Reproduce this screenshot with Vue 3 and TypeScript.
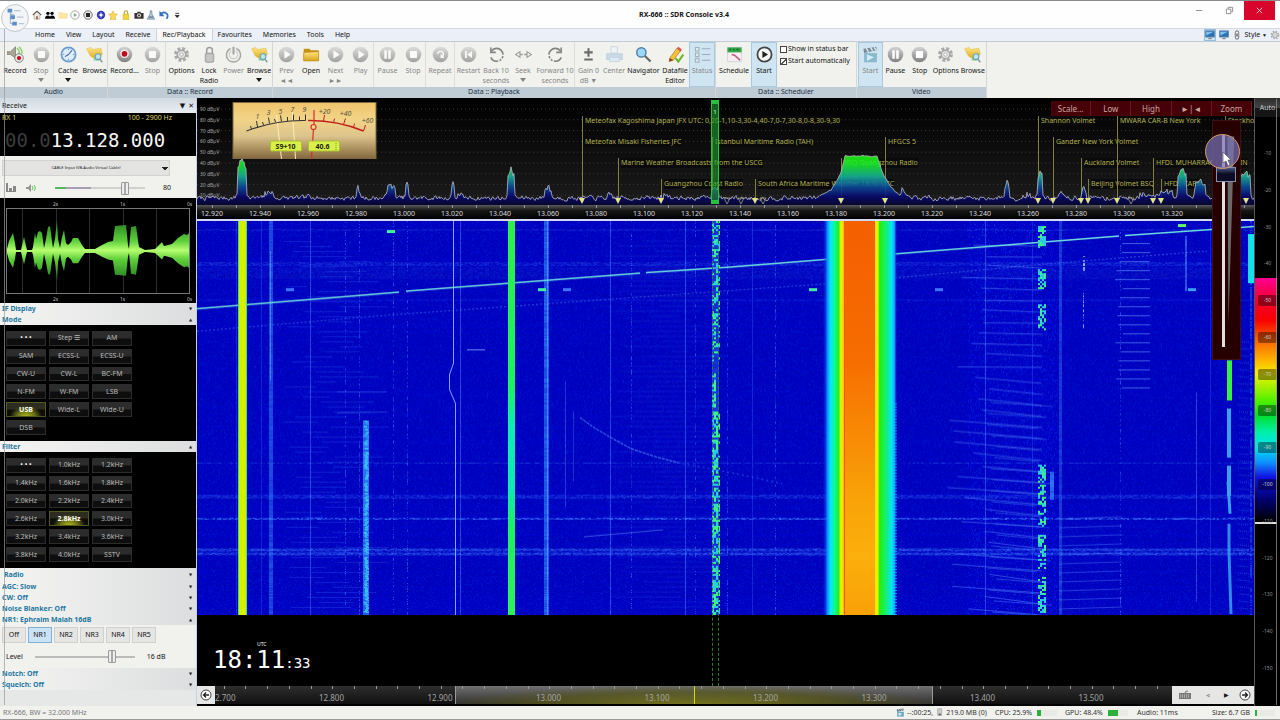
<script setup lang="ts">
import { computed, onMounted, ref } from 'vue'

interface RibbonItem { icon: string; label: string; sub?: string; w: number; off?: boolean; on?: boolean; sep?: boolean; drop?: boolean }
interface RibbonGroup { name: string; items: RibbonItem[]; checks?: boolean }
interface Station { x: number; row: number; name: string }
interface Peak { x: number; h: number; w: number }

const quick = ['home', 'people', 'folderpale', 'playo', 'stopo', 'help', 'star', 'lock', 'camera', 'flask', 'undo', 'more']
const tabs = ['Home', 'View', 'Layout', 'Receive', 'Rec/Playback', 'Favourites', 'Memories', 'Tools', 'Help']

const groups: RibbonGroup[] = [
  { name: 'Audio', items: [
    { icon: 'audiorec', label: 'Record', w: 28 },
    { icon: 'stop', label: 'Stop', w: 24, off: true, drop: true },
    { icon: 'clock', label: 'Cache', w: 28, sep: true, drop: true },
    { icon: 'browse', label: 'Browse', w: 25 } ] },
  { name: 'Data :: Record', items: [
    { icon: 'record', label: 'Record...', w: 31 },
    { icon: 'stop', label: 'Stop', w: 25, off: true },
    { icon: 'gear', label: 'Options', w: 31, sep: true },
    { icon: 'padlock', label: 'Lock', sub: 'Radio', w: 24 },
    { icon: 'power', label: 'Power', w: 25, off: true },
    { icon: 'browse', label: 'Browse', w: 26, drop: true } ] },
  { name: 'Data :: Playback', items: [
    { icon: 'play', label: 'Prev', sub: '◄◄', w: 25, off: true },
    { icon: 'folder', label: 'Open', w: 24 },
    { icon: 'play', label: 'Next', sub: '►►', w: 25, off: true },
    { icon: 'play', label: 'Play', w: 25, off: true },
    { icon: 'pause', label: 'Pause', w: 27, off: true, sep: true },
    { icon: 'stop', label: 'Stop', w: 24, off: true },
    { icon: 'repeat', label: 'Repeat', w: 28, off: true, sep: true },
    { icon: 'restart', label: 'Restart', w: 27, off: true, sep: true },
    { icon: 'back', label: 'Back 10', sub: 'seconds', w: 28, off: true },
    { icon: 'seek', label: 'Seek', w: 26, off: true, drop: true },
    { icon: 'forward', label: 'Forward 10', sub: 'seconds', w: 38, off: true },
    { icon: 'gain', label: 'Gain 0', sub: 'dB ▼', w: 27, off: true, sep: true },
    { icon: 'printer', label: 'Center', w: 24, off: true },
    { icon: 'search', label: 'Navigator', w: 35 },
    { icon: 'pencil', label: 'Datafile', sub: 'Editor', w: 28 },
    { icon: 'list', label: 'Status', w: 26, off: true, on: true } ] },
  { name: 'Data :: Scheduler', checks: true, items: [
    { icon: 'schedule', label: 'Schedule', w: 34 },
    { icon: 'playbig', label: 'Start', w: 26, on: true } ] },
  { name: 'Video', items: [
    { icon: 'clapper', label: 'Start', w: 25, off: true, on: true },
    { icon: 'pause', label: 'Pause', w: 25 },
    { icon: 'stop', label: 'Stop', w: 24 },
    { icon: 'gear', label: 'Options', w: 28 },
    { icon: 'browse', label: 'Browse', w: 26 } ] },
]

const modes = ['• • •', 'Step ☰', 'AM', 'SAM', 'ECSS-L', 'ECSS-U', 'CW-U', 'CW-L', 'BC-FM', 'N-FM', 'W-FM', 'LSB', 'USB', 'Wide-L', 'Wide-U', 'DSB']
const filters = ['• • •', '1.0kHz', '1.2kHz', '1.4kHz', '1.6kHz', '1.8kHz', '2.0kHz', '2.2kHz', '2.4kHz', '2.6kHz', '2.8kHz', '3.0kHz', '3.2kHz', '3.4kHz', '3.6kHz', '3.8kHz', '4.0kHz', 'SSTV']
const mode = ref('USB')
const filter = ref('2.8kHz')
const nrs = ['Off', 'NR1', 'NR2', 'NR3', 'NR4', 'NR5']
const nr = ref('NR1')
const volume = ref(80)
const level = ref(16)
const zoom = ref(84)
const showInStatus = ref(false)
const autoStart = ref(true)
const radioSections = ['AGC: Slow', 'CW: Off', 'Noise Blanker: Off']

/* Plot geometry: the display spans W units across, the pan strip S units */
const W = 1057
const S = 957
const pct = (x: number, total = W) => `${(x / total) * 100}%`
const panWindow = { left: pct(240, S), width: pct(478, S) }

const freqs = Array.from({ length: 21 }, (_, i) => ({ x: 15 + i * 48, t: (12.92 + i * 0.02).toFixed(3) }))
const ticks = Array.from({ length: 44 }, (_, i) => 15 + i * 24)
const levels = Array.from({ length: 9 }, (_, i) => ({ y: 11 + i * 10.8, t: `${90 - i * 10} dBµV` }))
const panLabels = Array.from({ length: 9 }, (_, i) => ({ x: 26 + i * 108.5, t: (12.7 + i * 0.1).toFixed(3) }))
const panTicks = Array.from({ length: 46 }, (_, i) => 5 + i * 21.7)
const scaleTicks = Array.from({ length: 15 }, (_, i) => -10 * (i + 1))

const stations: Station[] = [
  { x: 385, row: 0, name: 'Meteofax Kagoshima Japan JFX UTC: 0,20-1,10-3,30-4,40-7,0-7,30-8,0-8,30-9,30' },
  { x: 385, row: 1, name: 'Meteofax Misaki Fisheries JFC' },
  { x: 421, row: 2, name: 'Marine Weather Broadcasts from the USCG' },
  { x: 464, row: 3, name: 'Guangzhou Coast Radio' },
  { x: 515, row: 1, name: 'Istanbul Maritime Radio (TAH)' },
  { x: 558, row: 3, name: 'South Africa Maritime Weather 18:30 UTC' },
  { x: 644, row: 2, name: 'XSQ Guangzhou Radio' },
  { x: 688, row: 1, name: 'HFGCS 5' },
  { x: 841, row: 0, name: 'Shannon Volmet' },
  { x: 856, row: 1, name: 'Gander New York Volmet' },
  { x: 884, row: 2, name: 'Auckland Volmet' },
  { x: 891, row: 3, name: 'Beijing Volmet BSQ' },
  { x: 920, row: 0, name: 'MWARA CAR-B New York' },
  { x: 956, row: 2, name: 'HFDL MUHARRAQ BAHRAIN' },
  { x: 964, row: 3, name: 'HFDL CAPS' },
  { x: 1028, row: 0, name: 'Stockholm' },
]
const markers = [385, 421, 464, 558, 644, 688, 841, 856, 884, 891, 920, 956, 964, 1049]
const hollow = [530, 544, 566, 934]

function rng(seed: number) {
  let s = seed
  return () => {
    s = (s * 1664525 + 1013904223) >>> 0
    return s / 4294967296
  }
}

const peaks: Peak[] = [
  { x: 45, h: 45, w: 4 }, { x: 72, h: 11, w: 4 }, { x: 113, h: 8, w: 2 }, { x: 161, h: 18, w: 1 }, { x: 194, h: 18, w: 4 },
  { x: 210, h: 20, w: 1 }, { x: 256, h: 21, w: 1 }, { x: 263, h: 9, w: 2 }, { x: 314, h: 34, w: 3 }, { x: 351, h: 16, w: 3 },
  { x: 413, h: 9, w: 2 }, { x: 468, h: 7, w: 5 }, { x: 518, h: 17, w: 3 }, { x: 706, h: 16, w: 1 }, { x: 810, h: 21, w: 2 },
  { x: 830, h: 8, w: 4 }, { x: 843, h: 34, w: 2 }, { x: 864, h: 11, w: 2 }, { x: 887, h: 15, w: 2 }, { x: 955, h: 9, w: 14 },
  { x: 985, h: 36, w: 4 }, { x: 970, h: 12, w: 6 }, { x: 1003, h: 22, w: 5 }, { x: 1030, h: 13, w: 8 }, { x: 1048, h: 32, w: 5 },
]
const hill = [[622, 0], [634, 6], [640, 16], [644, 24], [648, 40], [680, 40], [686, 22], [693, 10], [703, 0]]
const trace = (() => {
  const r = rng(7)
  const pts: string[] = []
  let n = 0
  for (let x = 0; x <= W; x += 1) {
    n = n * 0.5 + (r() - 0.5) * 4
    let h = 5 + n
    for (const p of peaks) {
      const d = Math.abs(x - p.x)
      if (d <= p.w) h = Math.max(h, p.h * (1 - 0.2 * (d / p.w)) + (r() - 0.5) * 6)
      else if (d < p.w + 3) h = Math.max(h, 5 + n + (p.h * 0.15 * (p.w + 3 - d)) / 3)
    }
    for (let i = 1; i < hill.length; i++) {
      const [x0, h0] = hill[i - 1]
      const [x1, h1] = hill[i]
      if (x >= x0 && x <= x1) h = 7 + h0 + ((h1 - h0) * (x - x0)) / (x1 - x0) + n * 0.3
    }
    pts.push(`${x},${(105 - h).toFixed(1)}`)
  }
  return pts.join(' ')
})()

const env: number[][] = [[7, 2], [9, 10], [13, 18], [15, 8], [16, 1], [21, 1], [24, 14], [26, 5], [27, 1], [32, 1], [33, 4], [35, 18], [36, 12], [38, 19], [40, 20], [42, 18], [44, 3], [46, 12], [48, 24], [50, 25], [52, 10], [53, 3], [55, 12], [57, 31], [58, 12], [60, 3], [62, 14], [64, 21], [66, 8], [68, 6], [71, 9], [73, 13], [78, 13], [82, 6], [85, 2], [95, 2], [102, 6], [108, 9], [113, 10], [115, 25], [126, 26], [128, 6], [129, 2], [131, 24], [136, 25], [139, 4], [145, 1], [155, 2], [162, 9], [164, 5], [172, 7], [178, 13], [184, 17], [187, 16], [189, 18]]
const wave = computed(() => {
  const top = env.map(([x, a]) => `${x},${53 - a}`)
  const bot = [...env].reverse().map(([x, a]) => `${x},${53 + a * 0.95}`)
  return [...top, ...bot].join(' ')
})

const fall = ref<HTMLCanvasElement | null>(null)

function drawWaterfall(c: CanvasRenderingContext2D, w: number, h: number) {
  const r = rng(42)
  const img = c.createImageData(w, h)
  for (let y = 0; y < h; y++) {
    const row = r() * 10
    for (let x = 0; x < w; x++) {
      const i = (y * w + x) * 4
      const v = r()
      const hazy = x > 770 && x < 860 ? 14 : 0
      img.data[i] = 0
      img.data[i + 1] = v > 0.9 ? 20 + hazy : v * 6
      img.data[i + 2] = 180 + row + v * 18 + hazy * v
      img.data[i + 3] = 255
    }
  }
  c.putImageData(img, 0, 0)

  const col = (x: number, width: number, rgb: string, a: number, y0 = 0, y1 = h, jitter = 1, duty = 1) => {
    for (let y = y0; y < y1; y++) {
      if (r() > duty) continue
      c.fillStyle = `rgba(${rgb},${a * (0.6 + 0.4 * r())})`
      c.fillRect(x + Math.round((r() - 0.5) * jitter), y, width, 1)
    }
  }
  const band = (y: number, height: number, a: number) => {
    for (let yy = y; yy < y + height; yy++) {
      for (let x = 0; x < w; x += 2) {
        c.fillStyle = `rgba(60,120,255,${a * r()})`
        c.fillRect(x, yy, 2, 1)
      }
    }
  }
  const line = (pts: number[][], style: string, width: number, dash: number[] = []) => {
    c.strokeStyle = style
    c.lineWidth = width
    c.setLineDash(dash)
    c.beginPath()
    pts.forEach(([x, y], i) => (i ? c.lineTo(x, y) : c.moveTo(x, y)))
    c.stroke()
    c.setLineDash([])
  }

  band(41, 4, 0.35); band(46, 12, 0.15); band(78, 2, 0.2); band(273, 4, 0.4); band(296, 2, 0.9)
  band(326, 8, 0.35); band(327, 2, 0.6); band(331, 2, 0.6); band(241, 1, 0.5); band(8, 2, 0.25)

  /* Faint carriers */
  for (const x of [113, 263, 413, 488, 788]) col(x, 1, '70,140,255', 0.6)
  for (const x of [39, 64, 311, 555, 835, 1013]) col(x, 1, '50,110,255', 0.4)
  for (const x of [148, 162, 196, 210, 434, 498, 530, 578, 923]) col(x, 1, '90,160,255', 0.5, 0, h, 0, 0.35)
  col(72, 4, '50,140,255', 0.6); col(73, 1, '110,220,255', 0.5, 30, 160)
  col(347, 5, '50,140,255', 0.75); col(350, 1, '120,220,255', 0.5)
  col(862, 3, '50,130,255', 0.5)
  col(1053, 2, '60,160,255', 0.4, 0, h, 1, 0.6)
  col(368, 1, '80,140,255', 0.5, 160, 285, 0); col(376, 1, '80,140,255', 0.4, 190, 260, 0)
  col(999, 1, '120,170,255', 0.45, 171, 380, 0); col(988, 2, '70,140,255', 0.7, 15, 70)
  col(886, 2, '150,220,255', 0.9, 35, 50, 1, 0.6); col(886, 1, '150,220,255', 0.9, 72, 107, 1, 0.6)
  col(853, 4, '60,160,255', 0.8, 250, 278)

  /* Sweeper striations */
  for (let y = 22; y < 390; y += 11) {
    const slope = y > 150 ? 6 : 1
    const start = 748 + r() * 45
    line([[start, y + r() * 3], [845, y + slope + 2]], 'rgba(90,140,255,.5)', 1)
    if (y > 165) line([[790 + r() * 10, y + 5], [838 + r() * 18, y + 9]], 'rgba(90,150,255,.4)', 1)
  }
  for (let y = 22; y < 175; y += 9) line([[926 - r() * 8, y + 0.5], [953, y + 0.5]], 'rgba(100,150,255,.6)', 1)
  for (let y = 295; y < 390; y += 9) line([[862, y + 2], [925, y]], 'rgba(90,140,255,.4)', 1)
  for (let y = 120; y < 390; y += 7) line([[1040 + r() * 3, y], [1052, y + 1]], 'rgba(90,140,255,.4)', 1, [1, 1])
  for (let y = 20; y < 390; y += 5) {
    const x = 85 + r() * 60
    line([[x, y + 0.5], [x + 20 + r() * 40, y + 0.5]], 'rgba(60,110,255,.25)', 1)
    line([[405 + r() * 70, y], [480 + r() * 50, y]], 'rgba(60,110,255,.16)', 1)
  }
  line([[270, 128.5], [288, 128.5]], 'rgba(130,170,255,.8)', 1)
  line([[140, 170.5], [190, 170.5]], 'rgba(80,140,255,.4)', 1)
  line([[140, 191.5], [190, 190.5]], 'rgba(80,140,255,.4)', 1)
  line([[387, 315], [466, 308]], 'rgba(110,160,255,.5)', 1)

  /* Wandering carrier */
  line([[256.5, 0], [256.5, 142], [252.5, 153], [252.5, 168], [258.5, 182], [258.5, h]], 'rgba(160,190,255,.85)', 1)
  line([[383, 196], [397, 206], [412, 215], [434, 227], [458, 235], [481, 241]], 'rgba(100,160,255,.85)', 1, [3, 1])
  line([[481, 241], [539, 252], [585, 262]], 'rgba(90,150,255,.5)', 1, [2, 3])
  line([[0, 110], [190, 94], [539, 69], [640, 62], [860, 42], [1010, 30]], 'rgba(90,150,255,.5)', 1, [2, 2])
  line([[0, 87.5], [202, 71]], '#6fe0e0', 1.5)
  line([[209, 70], [443, 52]], '#6fe0e0', 1.5)
  line([[449, 51.5], [533, 46], [696, 33], [922, 15]], '#6fe0e0', 1.5)
  line([[928, 14.5], [w, 5.5]], '#6fe0e0', 1.5)

  const blob = (x: number, y: number, rgb: string) => {
    c.fillStyle = rgb
    c.fillRect(x, y, 8, 3)
  }
  blob(190, 9, '#3ff0a0'); blob(89, 67, '#3d74ff'); blob(341, 67, '#3ff0a0'); blob(366, 67, '#3d74ff')
  blob(612, 67, '#3ff0a0'); blob(738, 67, '#3d74ff'); blob(981, 3, '#5ff870'); blob(991, 67, '#38a0f0')

  /* Strong carriers */
  c.fillStyle = '#46e070'; c.fillRect(41, 0, 9, h)
  c.fillStyle = '#cdf200'; c.fillRect(42, 0, 7, h)
  col(45, 2, '250,225,0', 0.6)
  const g = c.createLinearGradient(0, 0, 0, h)
  g.addColorStop(0, '#2ff04a'); g.addColorStop(0.42, '#20f060'); g.addColorStop(0.52, '#12ecb0'); g.addColorStop(0.68, '#12e8b0'); g.addColorStop(0.78, '#20f060'); g.addColorStop(1, '#30f05a')
  c.fillStyle = g; c.fillRect(311, 0, 7, h)
  col(166, 6, '50,150,255', 0.9, 199); col(168, 3, '60,225,235', 0.8, 199, h, 2, 0.8)

  const speckle = (x: number, width: number, y0: number, y1: number, duty: number) => {
    for (let y = y0; y < y1; y += 2) {
      for (let xx = x; xx < x + width; xx += 2) {
        if (r() < duty) {
          c.fillStyle = r() > 0.5 ? '#3ff08a' : '#2cc8e8'
          c.fillRect(xx, y, 2, 2)
        }
      }
    }
  }
  col(515, 7, '50,120,255', 0.5)
  speckle(515, 7, 0, 140, 0.4); speckle(515, 4, 152, 185, 0.6); speckle(515, 7, 190, h, 0.6)
  for (const [a, b] of [[5, 27], [48, 68], [83, 110], [243, 304], [313, 346], [355, 391]]) speckle(841, 8, a, b, 0.6)

  /* Broadcast block with smooth shoulders */
  const b = c.createLinearGradient(626, 0, 700, 0)
  const stops: [number, string][] = [[0, 'rgba(0,40,220,0)'], [0.06, '#1090ff'], [0.1, '#00e8ff'], [0.16, '#10f890'], [0.21, '#20f020'], [0.24, '#e8f800'], [0.275, '#ffd000'], [0.29, '#f85a00'], [0.69, '#f85a00'], [0.7, '#ffe000'], [0.74, '#e0f800'], [0.765, '#20f010'], [0.85, '#18f070'], [0.93, '#00e8f8'], [0.97, '#2090ff'], [1, 'rgba(0,40,220,0)']]
  stops.forEach(([p, s]) => b.addColorStop(p, s))
  c.fillStyle = b; c.fillRect(626, 0, 74, h)
  const o = c.createLinearGradient(0, 0, 0, h)
  o.addColorStop(0, '#f45f00'); o.addColorStop(0.35, '#f76d00'); o.addColorStop(0.7, '#f9a208'); o.addColorStop(0.85, '#fbb00c'); o.addColorStop(1, '#f9a008')
  c.fillStyle = o; c.fillRect(648, 0, 30, h)
  for (let y = 182; y < h; y += 3) {
    c.fillStyle = 'rgba(0,225,240,.6)'
    c.fillRect(693, y, 7, 1)
  }

  c.fillStyle = '#36f046'; c.fillRect(1030, 139, 5, 40)
  c.fillStyle = '#3aa0f0'; c.fillRect(1030, 187, 4, 49); c.fillRect(1030, 244, 4, 30)
  line([[1031, 260], [1033, 292]], '#3aa0f0', 3)
  line([[1032, 302], [1032, 330], [1034, 392]], 'rgba(60,170,245,.8)', 3)
  c.fillStyle = '#18e0ea'; c.fillRect(1051, 13, 6, 49)
}

onMounted(() => {
  const el = fall.value
  const ctx = el?.getContext('2d')
  if (el && ctx) drawWaterfall(ctx, el.width, el.height)
})
</script>

<template>
  <div class="app">
    <svg class="defs" aria-hidden="true">
      <defs>
        <linearGradient id="ball" x1="0" y1="0" x2="0" y2="1"><stop offset="0" stop-color="#d4d4d4" /><stop offset="1" stop-color="#808080" /></linearGradient>
        <linearGradient id="gold" x1="0" y1="0" x2="0" y2="1"><stop offset="0" stop-color="#ffe680" /><stop offset="1" stop-color="#d9a41c" /></linearGradient>
      </defs>
      <symbol id="i-stop" viewBox="0 0 24 24"><circle cx="12" cy="12" r="11" fill="url(#ball)" /><rect x="7" y="7" width="10" height="10" rx="1" fill="#fff" /></symbol>
      <symbol id="i-play" viewBox="0 0 24 24"><circle cx="12" cy="12" r="11" fill="url(#ball)" /><path d="M9 6l9 6-9 6z" fill="#fff" /></symbol>
      <symbol id="i-pause" viewBox="0 0 24 24"><circle cx="12" cy="12" r="11" fill="url(#ball)" /><path d="M7.500 6h3.500v12H7.500zM13 6h3.500v12H13z" fill="#fff" /></symbol>
      <symbol id="i-record" viewBox="0 0 24 24"><circle cx="12" cy="12" r="11" fill="url(#ball)" /><circle cx="12" cy="11" r="6" fill="#eee" /><circle cx="12" cy="11" r="4" fill="#c00c1c" /></symbol>
      <symbol id="i-repeat" viewBox="0 0 24 24"><circle cx="12" cy="12" r="11" fill="url(#ball)" /><path d="M8 11a4 4 0 1 1 5 4.500M13 12v4h4" fill="none" stroke="#fff" stroke-width="2" /></symbol>
      <symbol id="i-restart" viewBox="0 0 24 24"><circle cx="12" cy="12" r="11" fill="url(#ball)" /><path d="M7 7h2.500v10H7zM17 7v10l-7-5z" fill="#fff" /></symbol>
      <symbol id="i-playbig" viewBox="0 0 24 24"><circle cx="12" cy="12" r="10" fill="#f6f6f6" stroke="#444" stroke-width="2.500" /><path d="M9 7l8 5-8 5z" fill="#222" /></symbol>
      <symbol id="i-audiorec" viewBox="0 0 24 24"><path d="M0 8h5l7-7v16l-7-5H0z" fill="#aaa693" stroke="#777" /><path d="M14 3q4 3 3 9M17 1q5 5 4 10" fill="none" stroke="#8ad06a" stroke-width="2" /><circle cx="17" cy="17" r="6" fill="#eee" stroke="#555" /><circle cx="17" cy="17" r="3" fill="#c00c1c" /></symbol>
      <symbol id="i-clock" viewBox="0 0 24 24"><circle cx="12" cy="12" r="10" fill="#dcedfb" stroke="#6f9cce" stroke-width="2.500" /><path d="M12 12l5-6M12 12l-5 3" stroke="#37628f" stroke-width="1.500" /><path d="M12 4v2M12 18v2M4 12h2M18 12h2" stroke="#6f9cce" stroke-width="1.500" /></symbol>
      <symbol id="i-browse" viewBox="0 0 24 24"><path d="M1 4l6-2 3 3 11-2 2 9-9 7-8-5z" fill="url(#gold)" stroke="#d8bc50" stroke-width=".8" /><path d="M10 20l5-8 5-1-2 10z" fill="#8fd09c" /><circle cx="17" cy="15" r="4" fill="#bfe4ee" stroke="#64a5b8" stroke-width="1.500" /><path d="M19 18l4 5" stroke="#7a9aa4" stroke-width="2" /></symbol>
      <symbol id="i-gear" viewBox="0 0 24 24"><circle cx="12" cy="12" r="8.500" fill="none" stroke="#a9a9a9" stroke-width="4" stroke-dasharray="4 2.670" /><circle cx="12" cy="12" r="6" fill="#e6e6e6" stroke="#a4a4a4" stroke-width="2" /><circle cx="12" cy="12" r="2.500" fill="#fafafa" stroke="#999" /></symbol>
      <symbol id="i-padlock" viewBox="0 0 24 24"><path d="M8 11V6a4 4 0 0 1 8 0v5" fill="none" stroke="#9a9a9a" stroke-width="2" /><rect x="6" y="10" width="12" height="13" rx="2" fill="#bdbdbd" stroke="#8e8e8e" /><path d="M8 14h8M8 17h8M8 20h8" stroke="#ddd" /></symbol>
      <symbol id="i-power" viewBox="0 0 24 24"><path d="M8 3.500a10 10 0 1 0 8 0" fill="none" stroke="#888" stroke-width="2" /><path d="M9 7a6 6 0 1 0 6 0" fill="none" stroke="#bbb" stroke-width="1.500" /><path d="M12 1v11" stroke="#888" stroke-width="3" /></symbol>
      <symbol id="i-folder" viewBox="0 0 24 24"><path d="M1 4h8l2 2h11v15H1z" fill="#c58f18" /><path d="M1 21V9l21-1v13z" fill="url(#gold)" stroke="#c58f18" /></symbol>
      <symbol id="i-folderpale" viewBox="0 0 24 24"><path d="M2 6h8l2 2h10v12H2z" fill="#ffe6a3" stroke="#f2d68e" /></symbol>
      <symbol id="i-back" viewBox="0 0 24 24"><path d="M5 7a9 9 0 1 1-1 9" fill="none" stroke="#555" stroke-width="2.200" stroke-dasharray="22 2 3 2 3 2" /><path d="M4 2v7h7" fill="none" stroke="#555" stroke-width="2.200" /></symbol>
      <symbol id="i-forward" viewBox="0 0 24 24"><path d="M19 7a9 9 0 1 0 1 9" fill="none" stroke="#555" stroke-width="2.200" stroke-dasharray="22 2 3 2 3 2" /><path d="M20 2v7h-7" fill="none" stroke="#555" stroke-width="2.200" /></symbol>
      <symbol id="i-seek" viewBox="0 0 24 24"><path d="M1 12l6-4v8zM23 12l-6-4v8z" fill="#f4f4f4" stroke="#777" stroke-width="1.500" /><path d="M7 12h10" stroke="#777" stroke-width="2" stroke-dasharray="4 2" /></symbol>
      <symbol id="i-gain" viewBox="0 0 24 24"><path d="M12 3v12M6 9h12M6 19h12" stroke="#333" stroke-width="3" /></symbol>
      <symbol id="i-printer" viewBox="0 0 24 24"><path d="M7 1h9v9H7z" fill="#eef5fb" stroke="#a9c1d6" /><path d="M1 11h22v8H1z" fill="#b9d0e6" stroke="#9cb6cf" /><path d="M5 16h14v6H5z" fill="#d5e4f1" stroke="#a9c1d6" /></symbol>
      <symbol id="i-search" viewBox="0 0 24 24"><circle cx="9" cy="9" r="6.500" fill="#9fd8f6" stroke="#4f7fa4" stroke-width="2" /><path d="M14 14l8 8" stroke="#666" stroke-width="3" /></symbol>
      <symbol id="i-pencil" viewBox="0 0 24 24"><path d="M4 17L14 3l5 4L9 20l-6 2z" fill="#f3c23a" stroke="#b27d1c" /><path d="M14 3l2-2 5 4-2 3z" fill="#d9534f" /><path d="M3 22l1-5 5 3z" fill="#8b3a2f" /><path d="M12 17l4 5 7-10" fill="none" stroke="#66b52c" stroke-width="3" /></symbol>
      <symbol id="i-list" viewBox="0 0 24 24"><path d="M2 2h5v5H2zM2 10h5v5H2zM2 18h5v5H2z" fill="#e9edf0" stroke="#8f999f" stroke-width="1.500" /><path d="M11 4h12M11 12h12M11 20h12" stroke="#8298a8" stroke-width="1.500" /></symbol>
      <symbol id="i-schedule" viewBox="0 0 24 24"><path d="M2 2h20v20H2z" fill="#f6eef2" stroke="#ccc" /><path d="M2 2h20v7H2z" fill="#32a548" /><path d="M5 5h2M10 5h2M15 5h3" stroke="#14602a" stroke-width="2" /><path d="M8 12l4 1 8 7" fill="none" stroke="#c06078" stroke-width="2.500" /></symbol>
      <symbol id="i-clapper" viewBox="0 0 24 24"><path d="M3 10h18v13H3z" fill="#6ea7bf" /><path d="M2 4l18-3 1 5L3 10z" fill="#51677a" /><path d="M6 3l3 5M12 2l3 5M17 2l3 4" stroke="#eee" stroke-width="2" /><path d="M7 12l10 4-10 5z" fill="#d6eef6" /></symbol>
      <symbol id="i-home" viewBox="0 0 24 24"><path d="M2 12L12 3l10 9" fill="none" stroke="#5c4a42" stroke-width="2.500" /><path d="M5 11l7-6 7 6v11H5z" fill="#efe9e2" stroke="#777" /><path d="M10 15h4v7h-4z" fill="#a5543a" /></symbol>
      <symbol id="i-people" viewBox="0 0 24 24"><circle cx="7" cy="8" r="4" /><circle cx="17" cy="8" r="4" /><path d="M0 21q0-8 7-8 4 0 5 3 1-3 5-3 7 0 7 8z" /></symbol>
      <symbol id="i-playo" viewBox="0 0 24 24"><circle cx="12" cy="12" r="10" fill="#fff" stroke="#999" stroke-width="2" /><path d="M9 7l8 5-8 5z" fill="#8aa89a" /></symbol>
      <symbol id="i-stopo" viewBox="0 0 24 24"><circle cx="12" cy="12" r="10" fill="#fff" stroke="#444" stroke-width="2" /><path d="M7 7h10v10H7z" fill="#222" /></symbol>
      <symbol id="i-help" viewBox="0 0 24 24"><circle cx="12" cy="12" r="10" fill="#3038b8" /><path d="M12 5l2 5 5 2-5 2-2 5-2-5-5-2 5-2z" fill="#fff" /></symbol>
      <symbol id="i-star" viewBox="0 0 24 24"><path d="M12 2l3 7 8 1-6 5 2 8H5l2-8-6-5 8-1z" fill="#fbd75a" stroke="#cf9c22" /></symbol>
      <symbol id="i-lock" viewBox="0 0 24 24"><path d="M8 11V6a4 4 0 0 1 8 0v5" fill="none" stroke="#b99b2a" stroke-width="2.500" /><path d="M5 10h14v13H5z" fill="#f5d533" stroke="#b99b2a" /></symbol>
      <symbol id="i-camera" viewBox="0 0 24 24"><path d="M1 7h6l2-3h6l2 3h6v14H1z" fill="#3a3230" /><circle cx="12" cy="13" r="5" fill="#ccc" /><circle cx="12" cy="13" r="2.500" fill="#444" /></symbol>
      <symbol id="i-flask" viewBox="0 0 24 24"><path d="M10 2h4v7l7 13H3l7-13z" fill="#b6cddd" stroke="#56788f" stroke-width="1.500" /><path d="M7 17h10" stroke="#345" stroke-width="2" /></symbol>
      <symbol id="i-undo" viewBox="0 0 24 24"><path d="M4 10q8-8 15-1 4 6-1 12" fill="none" stroke="#2f6fc0" stroke-width="4" /><path d="M1 2v13h12z" fill="#2f6fc0" /></symbol>
      <symbol id="i-more" viewBox="0 0 24 24"><path d="M8 8h9M8 13h9l-4.500 5z" stroke="#222" stroke-width="2" fill="#222" /></symbol>
      <symbol id="i-monitor" viewBox="0 0 24 24"><path d="M1 2h22v15H1z" fill="#2d6fb4" stroke="#6b89a5" stroke-width="2" /><path d="M3 4h18L3 13z" fill="#7cc4ee" /><path d="M8 19h8v3H8z" fill="#888" /></symbol>
    </svg>

    <header class="title">
      <button class="orb" aria-label="Application menu">
        <svg viewBox="0 0 28 28"><path d="M9 8v12M9 10h4M9 15h4M9 20h4" stroke="#9ab" fill="none" /><g fill="#5a8fc8"><path d="M6 4h5v4H6zM9 11h5v4H9zM11 18h5v4h-5z" /></g><path d="M13 6h7M16 13h7M18 20h6" stroke="#b9c6d2" stroke-width="1.500" /></svg>
      </button>
      <nav class="quick">
        <button v-for="q in quick" :key="q" :aria-label="q"><svg><use :href="'#i-' + q" /></svg></button>
      </nav>
      <h1>RX-666 :: SDR Console v3.4</h1>
      <div class="win">
        <button aria-label="Minimize"><svg viewBox="0 0 10 10"><path d="M1 5h7" stroke="#888" /></svg></button>
        <button aria-label="Restore"><svg viewBox="0 0 10 10"><path d="M1.500 3.500h5v5h-5zM3.500 3V1.500h5v5H7" fill="none" stroke="#888" /></svg></button>
        <button class="close" aria-label="Close"><svg viewBox="0 0 10 10"><path d="M2 2l6 6M8 2l-6 6" stroke="#ffd6da" /></svg></button>
      </div>
    </header>

    <nav class="tabs">
      <button v-for="t in tabs" :key="t" :class="{ sel: t === 'Rec/Playback' }">{{ t }}</button>
      <div class="style">
        <svg class="hot"><use href="#i-monitor" /></svg><svg><use href="#i-monitor" /></svg>
        <svg class="link" viewBox="0 0 12 12"><path d="M4 5V3a2 2 0 0 1 4 0v2M4 7v2a2 2 0 0 0 4 0V7M6 4v4M3 6h6" fill="none" stroke="#555" /></svg>
        <button>Style <small>▼</small></button>
        <svg><use href="#i-gear" /></svg>
      </div>
    </nav>

    <section class="ribbon">
      <div v-for="g in groups" :key="g.name" class="group">
        <div class="items">
          <button v-for="(b, i) in g.items" :key="i" class="tool" :class="{ off: b.off, on: b.on, sep: b.sep }" :style="{ width: b.w + 'px' }">
            <svg><use :href="'#i-' + b.icon" /></svg>
            <span>{{ b.label }}</span>
            <span v-if="b.sub">{{ b.sub }}</span>
            <i v-if="b.drop" class="caret"></i>
          </button>
          <div v-if="g.checks" class="checks">
            <label><input v-model="showInStatus" type="checkbox" />Show in status bar</label>
            <label><input v-model="autoStart" type="checkbox" />Start automatically</label>
          </div>
        </div>
        <div class="gname">{{ g.name }}</div>
      </div>
    </section>

    <main class="body">
      <aside class="side">
        <div class="dock"><span>Receive</span><button aria-label="Panel menu">▼</button><button aria-label="Close panel">✕</button></div>
        <div class="vfo">
          <div class="rx"><span>RX 1</span><span>100 - 2900 Hz</span></div>
          <div class="digits"><span>00.0</span>13.128.000</div>
        </div>
        <div class="audio">
          <select aria-label="Audio output"><option>CABLE Input (VB-Audio Virtual Cable)</option></select>
          <div class="vol">
            <svg viewBox="0 0 12 10"><path d="M1 0h2v9H1zM4 5h3v4H4zM8 3h3v6H8zM1 8h10v1H1z" fill="#888" /></svg>
            <svg viewBox="0 0 12 10"><path d="M0 4h2l3-3v8L2 6H0z" fill="#999" /><path d="M6 3q2 2 0 4M8 2q3 3 0 6" stroke="#5fc45f" fill="none" /></svg>
            <input v-model="volume" class="range loud" type="range" min="0" max="100" aria-label="Volume" />
            <output>{{ volume }}</output>
          </div>
        </div>
        <svg class="scope" viewBox="0 0 196 105">
          <defs><linearGradient id="wave" x1="0" y1="0" x2="0" y2="1"><stop offset="0" stop-color="#1f7a1f" /><stop offset=".35" stop-color="#5fd03a" /><stop offset=".5" stop-color="#b6ff70" /><stop offset=".65" stop-color="#5fd03a" /><stop offset="1" stop-color="#1f7a1f" /></linearGradient></defs>
          <rect width="196" height="105" fill="#000" />
          <path d="M22.500 10v86M56.500 10v86M89.500 10v86M123.500 10v86M156.500 10v86" stroke="#2c2c2c" />
          <rect x="6.500" y="10.500" width="183" height="85" fill="none" stroke="#777" />
          <polygon :points="wave" fill="url(#wave)" />
          <g fill="#bbb"><text x="53" y="8">2s</text><text x="120" y="8">1s</text><text x="187" y="8">0s</text><text x="53" y="103">2s</text><text x="120" y="103">1s</text><text x="187" y="103">0s</text></g>
        </svg>
        <button class="sec">IF Display<i>▼</i></button>
        <button class="sec">Mode<i>▲</i></button>
        <div class="pad">
          <button v-for="m in modes" :key="m" :class="{ lit: m === mode }" @click="mode = m">{{ m }}</button>
        </div>
        <button class="sec">Filter<i>▲</i></button>
        <div class="pad">
          <button v-for="f in filters" :key="f" :class="{ lit: f === filter }" @click="filter = f">{{ f }}</button>
        </div>
        <button class="sec radio">Radio<i>▼</i></button>
        <button v-for="s in radioSections" :key="s" class="sec">{{ s }}<i>▼</i></button>
        <button class="sec">NR1: Ephraim Malah 16dB<i>▲</i></button>
        <div class="nr">
          <button v-for="n in nrs" :key="n" :class="{ sel: n === nr }" @click="nr = n">{{ n }}</button>
        </div>
        <div class="lvl">
          <label for="lvl">Level</label>
          <input id="lvl" v-model="level" class="range" type="range" min="0" max="20" />
          <output>{{ level }} dB</output>
        </div>
        <button class="sec">Notch: Off<i>▼</i></button>
        <button class="sec">Squelch: Off<i>▼</i></button>
      </aside>

      <section class="display">
        <div class="spectrum">
          <svg class="layer" viewBox="0 0 1057 107" preserveAspectRatio="none">
            <line v-for="l in levels" :key="l.t" x1="0" x2="1057" :y1="l.y" :y2="l.y" stroke="#3a3a3a" stroke-dasharray="1 3" />
          </svg>
          <span v-for="l in levels" :key="l.t" class="db" :style="{ top: l.y + 'px' }">{{ l.t }}</span>
          <div v-for="s in stations" :key="s.name" class="station" :class="'r' + s.row" :style="{ left: pct(s.x) }"><span>{{ s.name }}</span></div>
          <svg class="layer" viewBox="0 0 1057 107" preserveAspectRatio="none">
            <defs><linearGradient id="sig" gradientUnits="userSpaceOnUse" x1="0" y1="56" x2="0" y2="106"><stop offset="0" stop-color="#20ff00" /><stop offset=".25" stop-color="#18e838" /><stop offset=".45" stop-color="#16b49a" /><stop offset=".65" stop-color="#0a50a0" /><stop offset=".85" stop-color="#080870" /><stop offset="1" stop-color="#050538" /></linearGradient></defs>
            <polygon :points="'0,107 ' + trace + ' 1057,107'" fill="url(#sig)" fill-opacity=".88" />
            <polyline :points="trace" fill="none" stroke="#b8b8cc" stroke-width=".8" />
            <path v-for="m in markers" :key="m" :d="`M${m - 3} 100h6l-3 6z`" fill="#e3e388" />
            <path v-for="m in hollow" :key="m" :d="`M${m - 3} 100h6l-3 6z`" fill="none" stroke="#a0a070" stroke-width=".8" />
          </svg>
          <div class="tuned" :style="{ left: pct(514) }">1</div>

          <svg class="meter" viewBox="0 0 144 57">
            <defs><linearGradient id="face" x1="0" y1="0" x2="0" y2="1"><stop offset="0" stop-color="#f0c46c" /><stop offset=".3" stop-color="#f2d488" /><stop offset=".6" stop-color="#dcc48c" /><stop offset="1" stop-color="#84683c" /></linearGradient></defs>
            <rect x=".5" y=".5" width="143" height="56" fill="url(#face)" stroke="#7d6a45" />
            <path d="M44 13l5 44M60 10l3 47" stroke="#f8f0bc" stroke-width="1" />
            <path d="M14 29Q42 18 73 18.500" fill="none" stroke="#333" stroke-width="1.200" />
            <path d="M19 27l-1-3M25 25l-1-6M31 23l-1-3M37 21.500l-1-6M43 20l-1-3M49 19.500l-1-6M55 19v-4M61 18.500v-6M67 18.500v-4M73 18.500v-6" stroke="#333" />
            <path d="M75.500 18.500Q104 18 131 29" fill="none" stroke="#c0201c" stroke-width="1.600" />
            <path d="M91 19l1-6M101 20.500l1-4M111 22.500l2-6M121 25.500l1-4M131 29l2-6" stroke="#c0201c" />
            <path d="M81.500 8v15M81 27l-2 30" stroke="#d2302c" stroke-width="1.200" /><circle cx="81" cy="25" r="2.500" fill="#f2d488" stroke="#d2302c" stroke-width="1.200" />
            <g class="nums"><text x="25" y="17">1</text><text x="36" y="13">3</text><text x="48" y="12">5</text><text x="60" y="10">7</text><text x="72" y="10">9</text><text x="92" y="12">+20</text><text x="113" y="14">+40</text><text x="135" y="21">+60</text></g>
            <g fill="#d9f04a" stroke="#a8c030"><rect x="38" y="39" width="31" height="10" rx="1" /><rect x="76" y="39" width="31" height="10" rx="1" /></g>
            <g class="vals"><text x="53" y="47">S9+10</text><text x="90" y="47">40.6</text></g><path d="M103.500 41v7" stroke="#7a9a20" stroke-dasharray="1 1" />
          </svg>

          <div class="menu"><button>Scale...</button><button>Low</button><button>High</button><button>►|◄</button><button>Zoom</button></div>
          <div class="zoomer">
            <svg viewBox="0 0 28 240"><path d="M15 16h7L16 210z" fill="#6a6868" /></svg>
            <input v-model="zoom" type="range" min="0" max="100" aria-label="Zoom" />
            <div class="pointer"><svg viewBox="0 0 10 14"><path d="M1 0v11l3-2 2 5 2-1-2-5h3z" fill="#fff" stroke="#444" stroke-width=".6" /></svg></div>
          </div>
        </div>
        <div class="ruler">
          <i v-for="t in ticks" :key="t" :style="{ left: pct(t) }"></i>
          <span v-for="f in freqs" :key="f.t" :style="{ left: pct(f.x) }">{{ f.t }}</span>
        </div>
        <div class="fall"><canvas ref="fall" width="1057" height="393"></canvas></div>
        <div class="below">
          <div class="time"><small>UTC</small><div>18:11<b>:33</b></div></div>
        </div>
        <div class="passband" :style="{ left: pct(515) }"></div>
        <div class="pan">
          <button aria-label="Scroll left"><svg viewBox="0 0 14 14"><circle cx="7" cy="7" r="5" fill="#fff" stroke="#444" /><path d="M10 7H5M7 4.500L4.500 7 7 9.500" stroke="#222" stroke-width="1.300" fill="none" /></svg></button>
          <div class="strip">
            <div class="window" :style="panWindow"></div>
            <i v-for="t in panTicks" :key="t" :style="{ left: pct(t - 18, S) }"></i>
            <span v-for="l in panLabels" :key="l.t" :style="{ left: pct(l.x - 18, S) }">{{ l.t }}</span>
          </div>
          <div class="panbtns">
            <button aria-label="Keyboard"><svg viewBox="0 0 14 14"><path d="M1 5h12v6H1z" fill="#777" /><path d="M2 7h10M2 9h10" stroke="#ddd" stroke-dasharray="1 1" /><path d="M7 5q0-2 3-2" stroke="#777" fill="none" /></svg></button>
            <button aria-label="Step left">◃</button><button aria-label="Step right">▶</button>
            <button aria-label="Scroll right"><svg viewBox="0 0 14 14"><circle cx="7" cy="7" r="5" fill="#fff" stroke="#444" /><path d="M4 7h5M7 4.500L9.500 7 7 9.500" stroke="#222" stroke-width="1.300" fill="none" /></svg></button>
          </div>
        </div>
      </section>

      <aside class="scale">
        <button>Auto</button>
        <div class="ramp">
          <span v-for="t in scaleTicks" :key="t" :class="{ chip: t <= -50 && t >= -100 }">{{ t }}</span>
        </div>
      </aside>
    </main>

    <footer class="status">
      <span class="grow">RX-666, BW = 32.000 MHz</span>
      <span class="rec"><svg><use href="#i-clapper" /></svg>--:00:25, <svg viewBox="0 0 24 24"><path d="M7 2h11v18H7z" fill="#ccc" stroke="#777" /><path d="M10 15h5v4h-5z" fill="#444" /></svg> 219.0 MB (0)</span>
      <span class="cpu">CPU: 25.9% <i class="bar"></i></span>
      <span class="gpu">GPU: 48.4% <i class="bar wide"></i></span>
      <span class="aud">Audio: 11ms</span>
      <span class="size">Size: 6.7 GB <i class="bar thin"></i></span>
    </footer>
  </div>
</template>

<style>
html, body { background: #f1f1ee; }
body { margin: 0; }
</style>

<style scoped>
.app { position: relative; display: flex; flex-direction: column; min-height: 100vh; box-sizing: border-box; border-top: 1px solid #8a8a8a; border-bottom: 1px solid #999; font: 7px/10px "Noto Sans", "Open Sans", sans-serif; color: #141414; background: #f1f1ee; overflow: hidden; }
.app::before, .app::after { content: ""; position: absolute; top: 28px; bottom: 14px; left: 4px; width: 1px; background: #9a9a9a; opacity: .7; z-index: 5; }
.app::after { left: auto; right: 3px; top: 98px; }
.defs { position: absolute; width: 0; height: 0; }
button { font: inherit; color: inherit; background: none; border: 0; padding: 0; margin: 0; }
svg { display: block; }

.title { position: relative; display: flex; align-items: center; height: 27px; background: #fefefe; }
.orb { width: 28px; height: 28px; margin: 3px 2px 0 1px; border: 1px solid #c4c8cc; border-radius: 50%; background: #f3f5f6; z-index: 3; align-self: flex-start; flex: none; }
.quick { display: flex; width: 152px; }
.quick button { flex: 1; display: flex; justify-content: center; }
.quick svg { width: 10px; height: 10px; }
.title h1 { position: absolute; left: 88px; right: 0; top: 9px; margin: 0; text-align: center; font-size: 7px; font-weight: 700; color: #111; pointer-events: none; }
.win { margin-left: auto; display: flex; align-self: flex-start; margin-right: 5px; }
.win button { width: 30px; height: 19px; display: grid; place-items: center; }
.win svg { width: 9px; height: 9px; }
.win .close { width: 31px; background: #d8062c; }

.tabs { display: flex; box-sizing: border-box; height: 13px; padding-left: 30px; background: #ebeff8; border-top: 1px solid #d5dae2; }
.tabs > button { padding: 0 6px 0 5px; line-height: 12px; }
.tabs .sel { background: #f7f8f7; border: 1px solid #ccd3da; border-width: 0 1px; }
.style { margin-left: auto; display: flex; align-items: center; gap: 3px; }
.style svg { width: 10px; height: 10px; }
.style .hot { background: #cfe6f6; border: 1px solid #8fbfe0; }
.style small { font-size: 5px; }

.ribbon { display: flex; box-sizing: border-box; height: 57px; background: #f1f2ee; border-top: 1px solid #c3ccd5; }
.group { display: flex; flex-direction: column; border-right: 1px solid #d3d7d8; }
.items { flex: 1; display: flex; padding-left: 1px; }
.gname { height: 11px; text-align: center; background: #bfccd6; color: #1c2e3e; }
.tool { display: flex; flex-direction: column; align-items: center; padding-top: 4px; box-sizing: border-box; white-space: nowrap; }
.tool svg { width: 17px; height: 17px; margin-bottom: 3px; flex: none; }
.tool.sep { margin-left: 1px; box-shadow: -1px 0 #dcdedc; }
.tool.off { color: #858585; }
.tool.off svg { opacity: .7; }
.tool.on { background: #cfe5f2; box-shadow: inset 0 0 0 1px #a6c9de; }
.caret { border: 3px solid transparent; border-top: 4px solid currentColor; border-bottom: 0; margin-top: 2px; }
.checks { display: flex; flex-direction: column; gap: 2px; padding: 2px 6px 0 3px; }
.checks label { display: flex; align-items: center; gap: 1px; white-space: nowrap; }
.checks input { appearance: none; width: 7px; height: 7px; margin: 0; border: 1px solid #444; background: #fff; }
.checks input:checked { background: linear-gradient(135deg, #fff 40%, #555 45% 60%, #fff 65%); }

.body { flex: 1; display: flex; }
.side { width: 196px; flex: none; display: flex; flex-direction: column; border-right: 1px solid #c4d0e8; background: #e6e8e8; }
.dock { display: flex; align-items: center; gap: 3px; height: 15px; padding: 0 2px; background: linear-gradient(#d2dbe2, #e8edf1); }
.dock span { flex: 1; }
.dock button { font: 7px/8px "DejaVu Sans", sans-serif; }
.vfo { height: 43px; background: #000; }
.rx { display: flex; justify-content: space-between; padding: 0 24px 0 2px; color: #d8d260; }
.digits { font: 19px/34px "DejaVu Sans Mono", monospace; height: 33px; color: #f6f6f6; padding-left: 5px; white-space: nowrap; }
.digits span { color: #3c3c3c; }
.audio { height: 42px; background: #f1f1ee; box-sizing: border-box; padding: 4px 0 0 2px; }
.audio select { appearance: none; display: block; width: 168px; height: 16px; padding: 0 10px; border: 1px solid #d2d2d0; border-radius: 0; background: linear-gradient(#222, #222) no-repeat 159px 6px / 6px 1px, linear-gradient(#222, #222) no-repeat 160px 7px / 4px 1px, linear-gradient(#222, #222) no-repeat 161px 8px / 2px 1px, #e3e3e1; font: 4px/14px "Noto Sans", "Open Sans", sans-serif; text-align: center; text-align-last: center; color: #222; }
.vol { display: flex; align-items: center; height: 24px; padding-left: 3px; }
.vol svg { width: 12px; height: 10px; margin-right: 9px; }
.vol .range { width: 90px; margin: 0 18px 0 8px; }
.range { appearance: none; height: 14px; background: linear-gradient(#bbb, #bbb) no-repeat center / 100% 2px; }
.range.loud { background: linear-gradient(90deg, #55b862 12%, #a79fb4 12% 40%, #d0d0d0 40%) no-repeat center / 100% 2px; }
.range::-webkit-slider-thumb { appearance: none; width: 8px; height: 13px; border: 1px solid #999; border-radius: 1px; background: linear-gradient(90deg, #eee 40%, #aaa 40% 60%, #eee 60%); }
.scope { height: 105px; width: 196px; }
.scope text { font-size: 5px; }
.sec { display: flex; align-items: center; justify-content: space-between; height: 11px; padding: 0 4px 0 2px; font-weight: 700; color: #2477a0; background: linear-gradient(90deg, #f4f4f2, #dcdedf); text-align: left; flex: none; }
.sec.radio { height: 13px; padding-left: 4px; }
.sec i { font: 4px/8px "DejaVu Sans", sans-serif; color: #222; }
.pad { display: grid; grid-template-columns: repeat(3, 40px); grid-template-rows: repeat(6, 1fr); gap: 3px; height: 116px; box-sizing: border-box; padding: 6px 0 6px 6px; background: #000; }
.pad button { color: #b8b8b8; border: 1px solid #2c2c2c; background: linear-gradient(#2c2c2c 48%, #0e0e0e 52%); line-height: 12px; }
.pad button:first-child { color: #fff; }
.pad .lit { color: #fff; font-weight: 700; border-color: #55581c; background: radial-gradient(ellipse at 50% 110%, #b8c020 0, #666c14 35%, transparent 60%), linear-gradient(#2c2c20 48%, #0e0e08 52%); }
.nr { display: flex; gap: 2px; padding: 2px; background: #f1f1ee; }
.nr button { width: 24px; height: 16px; box-sizing: border-box; border: 1px solid #d0d0ce; background: #e5e5e3; }
.nr .sel { background: #cbe3f5; border-color: #7fb0d6; }
.lvl { display: flex; align-items: center; height: 23px; padding-left: 6px; background: #f1f1ee; }
.lvl .range { width: 100px; margin: 0 12px 0 12px; }

.display { flex: 1; min-width: 0; display: flex; flex-direction: column; position: relative; background: #000; overflow: hidden; }
.spectrum { position: relative; height: 107px; background: linear-gradient(#000, #1c1c1c); z-index: 2; }
.layer { position: absolute; left: 0; top: 0; width: 100%; height: 107px; }
.db { position: absolute; left: 3px; font-size: 5px; line-height: 8px; margin-top: -4px; color: #a0a0a0; }
.station { position: absolute; bottom: 3px; border-left: 1px solid #80803a; padding-left: 2px; color: #b2b252; white-space: nowrap; }
.station span { display: block; background: #0a0a0a; line-height: 10px; }
.station.r0 { top: 18px; }
.station.r1 { top: 39px; }
.station.r2 { top: 60px; }
.station.r3 { top: 81px; }
.tuned { position: absolute; top: 2px; width: 8px; height: 104px; padding-top: 7px; box-sizing: border-box; background: rgba(30, 160, 45, .6); text-align: center; font-size: 6px; line-height: 10px; color: #d8ffd8; box-shadow: inset 0 4px #2cc040, inset 0 -4px #2cc040, inset 1px 0 #2cc040, inset -1px 0 #2cc040; }
.meter { position: absolute; left: 35px; top: 4px; width: 145px; height: 57px; }
.nums { font-size: 7px; font-style: italic; fill: #555038; text-anchor: middle; }
.vals { font-size: 7px; font-weight: 700; fill: #1c2406; text-anchor: middle; }
.menu { position: absolute; right: 2px; top: 3px; display: flex; width: 201px; }
.menu button { flex: 1; height: 15px; background: #460008; border-right: 1px solid #6a1820; color: #c8a8a0; font-size: 8px; }
.zoomer { position: absolute; right: 13px; top: 22px; width: 29px; height: 240px; background: #260000; border: 1px solid #3e1014; box-sizing: border-box; }
.zoomer > svg { position: absolute; inset: 0; }
.zoomer input { position: absolute; left: 3px; top: 14px; width: 20px; height: 212px; margin: 0; appearance: none; writing-mode: vertical-lr; direction: rtl; background: linear-gradient(#e6dede, #e6dede) no-repeat 6px 0 / 3px 100%; }
.zoomer input::-webkit-slider-thumb { appearance: none; width: 20px; height: 15px; border: 1px solid #8890a8; background: linear-gradient(#4c5680, #0c0c24 45%); }
.pointer { position: absolute; left: -8px; top: 13px; width: 35px; height: 35px; box-sizing: border-box; border: 1px solid #d89868; border-radius: 50%; background: rgba(120, 115, 185, .7); }
.pointer svg { width: 10px; height: 14px; margin: 17px 0 0 16px; }
.ruler { position: relative; height: 14px; background: linear-gradient(#5a5a5a, #151515 40%, #000); border-bottom: 2px solid #d4d8f0; overflow: hidden; }
.ruler i, .strip i { position: absolute; top: 0; width: 1px; height: 3px; background: #999; }
.ruler span { position: absolute; bottom: 0; transform: translateX(-50%); color: #ddd; }
.fall { flex: 393 1 0; min-height: 0; position: relative; }
.fall canvas { position: absolute; width: 100%; height: 100%; }
.below { flex: 71 1 0; min-height: 0; display: flex; align-items: flex-start; }
.time { margin: 26px 0 0 16px; color: #fff; display: flex; flex-direction: column; }
.time small { font-size: 5px; line-height: 6px; text-align: center; }
.time div { font: 24px/26px "DejaVu Sans Mono", monospace; }
.time b { font-size: 14px; font-weight: 400; }
.passband { position: absolute; width: 5px; top: 123px; bottom: 20px; border: 1px dashed #2c7a2c; border-width: 0 1px; }
.pan { display: flex; height: 18px; margin-bottom: 2px; position: relative; z-index: 1; }
.pan button { display: grid; place-items: center; width: 18px; background: #e6e6e4; }
.pan svg { width: 14px; height: 14px; }
.strip { flex: 1; position: relative; overflow: hidden; background: linear-gradient(#2e2e2e, #101010); }
.strip span { position: absolute; top: 6px; transform: translateX(-50%); font-size: 8px; line-height: 11px; color: #a4a4a4; }
.window { position: absolute; top: 0; bottom: 0; box-sizing: border-box; border: 1px solid #999; border-width: 0 1px; background: linear-gradient(#d8d800, #d8d800) no-repeat center / 1px 100%, radial-gradient(ellipse at 50% 120%, #7e7d20, rgba(90, 90, 20, .6) 50%, transparent 75%), linear-gradient(#707070, #303030); }
.panbtns { display: flex; width: 82px; background: #e6e6e4; justify-content: space-between; }
.panbtns button { font: 6px/8px "DejaVu Sans", sans-serif; }
.panbtns button:first-child { width: 26px; }

.scale { width: 26px; flex: none; display: flex; flex-direction: column; background: #000; border-left: 1px solid #555; box-sizing: border-box; }
.scale button { height: 19px; background: linear-gradient(#2c2c2c, #444 50%, #161616 52%); color: #ccc; }
.ramp { flex: 1; display: flex; flex-direction: column; padding: 31px 0 32px; justify-content: space-between; align-items: center; font-size: 5px; color: #909090; background: linear-gradient(#ff0090 0, #f00030 9%, #f80000 17%, #f86000 25%, #ffb000 33%, #f0f000 39%, #50f000 50%, #00e030 56%, #00f0b0 63%, #00e0f0 69%, #1090ff 75%, #1010e0 81%, #000070 90%, #000 99%, #ddd 99%) no-repeat 0 161px / 22px 246px; }
.ramp span { line-height: 11px; width: 19px; text-align: center; }
.ramp .chip { background: rgba(0, 0, 0, .4); color: #ccc; border-radius: 2px; }

.status { display: flex; align-items: center; height: 13px; padding: 0 5px 0 3px; color: #333; white-space: nowrap; }
.status .grow { flex: 1; color: #777; }
.status span { display: flex; align-items: center; gap: 3px; }
.status svg { width: 9px; height: 9px; }
.status .rec { width: 99px; gap: 2px; }
.status .cpu { width: 70px; }
.status .gpu { width: 72px; }
.status .aud { width: 75px; }
.status .size { width: 63px; }
.bar { width: 20px; height: 6px; margin-left: 2px; background: linear-gradient(90deg, #2cb03c 4px, #e9e9e6 4px); }
.bar.wide { background: linear-gradient(90deg, #2cb03c 10px, #e9e9e6 10px); }
.bar.thin { background: linear-gradient(90deg, #2cb03c 2px, #e9e9e6 2px); }
</style>
